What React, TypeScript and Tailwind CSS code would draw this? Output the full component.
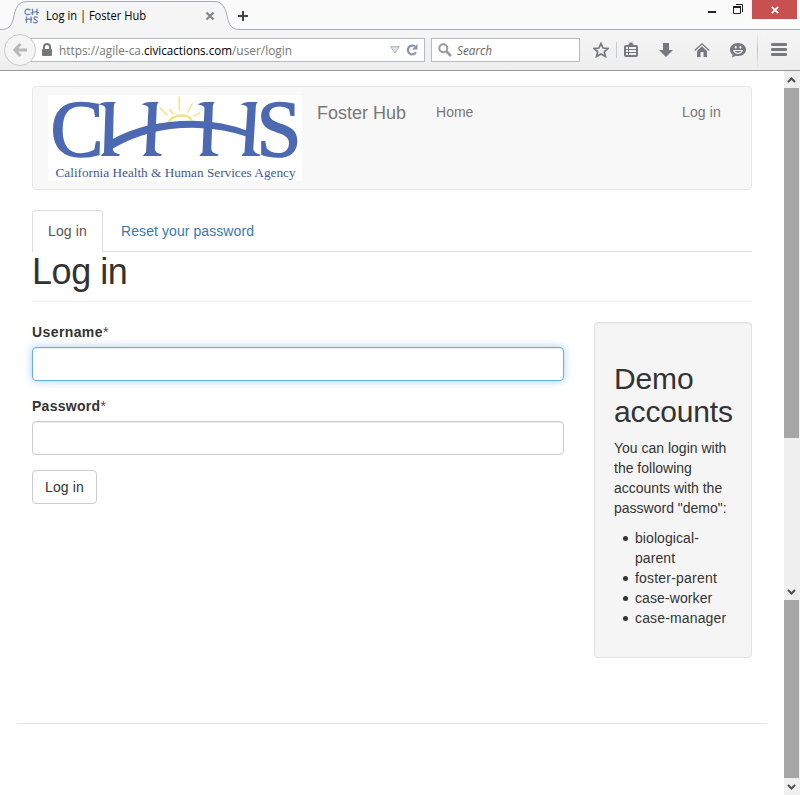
import type { ReactNode } from "react";

const accounts = [
  { name: "biological-parent", tracking: "tracking-[0.08px]" },
  { name: "foster-parent", tracking: "tracking-[0.2px]" },
  { name: "case-worker", tracking: "tracking-[0.1px]" },
  { name: "case-manager", tracking: "tracking-[0.15px]" },
];

const pillars = [
  { top: 57.5, foot: 56.5 },
  { top: 100.5, foot: 98.5 },
  { top: 156.5, foot: 155 },
  { top: 199.5, foot: 197 },
];

function AgencyLogo() {
  return (
    <svg width="254" height="86" viewBox="0 0 254 86" className="block overflow-visible bg-white" aria-label="California Health & Human Services Agency">
      <g fill="none" stroke="#f3e387" strokeLinecap="round" strokeWidth="1.5">
        <path d="M121 26 Q126 20.5 134 20.5 Q140 20.5 143 24" strokeWidth="2.4" />
        <path d="M112 13 L119 20 M122 14.5 L125 19 M131 2 L131.500 15 M144 9 L140 17 M151.500 18 L146 21" />
      </g>
      <g fill="#4c69b1" stroke="#4c69b1" strokeWidth="1.6" fontFamily="'Liberation Serif', serif">
        <text x="2.500" y="60.500" fontSize="81" textLength="53" lengthAdjust="spacingAndGlyphs">C</text>
        <text x="208.500" y="60.500" fontSize="81" textLength="45" lengthAdjust="spacingAndGlyphs">S</text>
      </g>
      <g fill="#4c69b1">
        {pillars.map(({ top, foot }) => (
          <path
            key={top}
            d={`M${top - 7} 9.500 Q${top - 3} 6.800 ${top + 1} 7 H${top + 10.5} Q${top + 8.5} 8 ${top + 8.3} 12 L${foot + 8.3} 54 Q${foot + 8.5} 58 ${foot + 15.5} 59.500 L${foot + 14.5} 61 H${foot - 3.5} Q${foot - 3} 59 ${foot - 0.5} 57.500 L${top} 13 Q${top - 0.5} 10 ${top - 7} 9.500Z`}
          />
        ))}
        <path d="M63 45 Q97 25.500 145 25.700 Q175 26 200 36 L200 42 Q175 33 145 32.700 Q100 32.500 63 54.500Z" />
      </g>
      <text x="7.500" y="82" fontSize="13.500" textLength="240" lengthAdjust="spacingAndGlyphs" fill="#40589f" fontFamily="'Liberation Serif', serif">
        California Health &amp; Human Services Agency
      </text>
    </svg>
  );
}

function Favicon() {
  return (
    <svg width="16" height="16" viewBox="0 0 16 16" fill="none" stroke="#6b83bd" strokeWidth="1.300">
      <path d="M6.500 1.800 Q1 0 1 4 Q1 7.500 6.500 6.200 M8.500 .8V7 M13 .8V7 M7 5Q11 3 15 4.500 M2.500 8.500V15 M7 8.500V15 M1 12Q4 10.500 8 11.500 M14 9.500Q10 8 10 10.300Q10 11.500 12 12Q14 13 13 14.200Q11.500 15.500 9 14" />
    </svg>
  );
}

function ToolIcon({ children }: { children: ReactNode }) {
  return (
    <svg width="16" height="16" viewBox="0 0 16 16" fill="#757980" className="shrink-0">
      {children}
    </svg>
  );
}

function TitleBar() {
  return (
    <div className="relative flex h-[30px] bg-[#fbfbfb]">
      <svg width="800" height="30" viewBox="0 0 800 30" className="absolute inset-0">
        <path d="M0 29.500 C9 29.500 11.500 26 13.500 18 C15.500 8 18 1.500 27 1.500 H214 C223 1.500 225.500 8 227.500 18 C229.500 26 232 29.500 240 29.500 H800 V31 H0Z" fill="#f5f5f5" stroke="#a4a9b2" />
      </svg>
      <div className="relative flex h-full w-full pl-[24px]">
        <div className="flex w-[181px] items-start pt-[8px]">
          <Favicon />
          <svg width="104" height="16" className="ml-[6px] block overflow-visible" fontFamily="'Open Sans', sans-serif">
            <text x="0" y="12" fontSize="12" textLength="100" lengthAdjust="spacingAndGlyphs">Log in | Foster Hub</text>
          </svg>
        </div>
        <svg width="10" height="10" viewBox="0 0 10 10" className="mt-[11px]">
          <path d="M1.500 1.500 L8.500 8.500 M8.500 1.500 L1.500 8.500" stroke="#7f8791" strokeWidth="2.200" />
        </svg>
        <svg width="10" height="10" viewBox="0 0 10 10" className="ml-[23px] mt-[11px]">
          <path d="M5 0V10M0 5H10" stroke="#444" strokeWidth="2" />
        </svg>
        <svg width="36" height="14" viewBox="0 0 36 14" className="ml-[460px] mt-[2px]">
          <path d="M0 9H8V11H0Z" fill="#222" />
          <path d="M25.500 4.500H32.500V11.500H25.500Z M28 2.500H34.500V10" fill="none" stroke="#222" />
          <path d="M25 4H33V6H25Z" fill="#222" />
        </svg>
        <div className="ml-[8px] flex h-[19px] w-[45px] items-center justify-center bg-[#c75050]">
          <svg width="8" height="8" viewBox="0 0 8 8">
            <path d="M.8.8L7.200 7.200M7.200.8L.8 7.200" stroke="#fff" strokeWidth="1.700" />
          </svg>
        </div>
      </div>
    </div>
  );
}

function Toolbar() {
  return (
    <div className="flex h-[41px] items-center border-b border-[#989898] bg-linear-to-b from-[#f5f5f5] to-[#eeeeee] pl-[4px]">
      <div className="z-10 flex size-[32px] shrink-0 items-center justify-center rounded-full border border-[#c9c9c9] bg-[#f5f5f5]">
        <svg width="16" height="16" viewBox="0 0 16 16" fill="none" stroke="#b8b8b8" strokeWidth="3">
          <path d="M8.500 2L2.800 8L8.500 14M3 8H15" />
        </svg>
      </div>
      <div className="-ml-[8px] flex h-[24px] w-[397px] shrink-0 items-center border border-[#b4bac4] bg-white pl-[12px]">
        <svg width="12" height="14" viewBox="0 0 12 14">
          <path d="M3 7V4A3 3 0 0 1 9 4V7" fill="none" stroke="#777" strokeWidth="2" />
          <rect x="1" y="6" width="10" height="7" rx="1" fill="#777" />
        </svg>
        <svg width="240" height="20" className="ml-[6px] overflow-visible" fontFamily="'Open Sans', sans-serif">
          <text y="15" fontSize="12" fill="#777">
            <tspan x="0" textLength="85" lengthAdjust="spacingAndGlyphs">https://agile-ca.</tspan>
            <tspan x="85" fill="#000" textLength="88" lengthAdjust="spacingAndGlyphs">civicactions.com</tspan>
            <tspan x="173" textLength="60" lengthAdjust="spacingAndGlyphs">/user/login</tspan>
          </text>
        </svg>
        <svg width="10" height="8" viewBox="0 0 10 8" className="ml-[91px]">
          <path d="M.7.7H9.300L5 7Z" fill="#dce2eb" stroke="#a9b1bb" />
        </svg>
        <svg width="12" height="12" viewBox="0 0 12 12" className="ml-[6px]">
          <path d="M9 2.500A4.400 4.400 0 1 0 10 8.200" fill="none" stroke="#8795a5" strokeWidth="2.200" />
          <path d="M11.500 0V5.500H6Z" fill="#8795a5" />
        </svg>
      </div>
      <div className="ml-[6px] flex h-[24px] w-[149px] shrink-0 items-center border border-[#b4bac4] bg-white pl-[6px]">
        <svg width="14" height="14" viewBox="0 0 14 14" fill="none" stroke="#999">
          <circle cx="5.300" cy="5.300" r="4" strokeWidth="2" />
          <path d="M8.500 8.500L13 13" strokeWidth="2.600" />
        </svg>
        <svg width="40" height="20" className="ml-[5px] overflow-visible" fontFamily="'Open Sans', sans-serif">
          <text x="0" y="15" fontSize="12" fontStyle="italic" fill="#666" textLength="35" lengthAdjust="spacingAndGlyphs">Search</text>
        </svg>
      </div>
      <div className="ml-[13px] flex items-center">
        <ToolIcon>
          <path d="M8 1.500L10 6L15 6.500L11.300 9.800L12.500 14.500L8 12L3.500 14.500L4.700 9.800L1 6.500L6 6Z" fill="none" stroke="#757980" strokeWidth="1.700" />
        </ToolIcon>
        <div className="ml-[7px] mr-[6px] h-[16px] w-px bg-[#c5cad4]" />
        <ToolIcon>
          <path fillRule="evenodd" d="M1 5Q1 3 3 3H4.500Q6.500 3 6.500 .5H9.500Q9.500 3 11.500 3H13Q15 3 15 5V13Q15 15 13 15H3Q1 15 1 13ZM3 5V7H5V5ZM6 5V7H13V5ZM3 8V10H5V8ZM6 8V10H13V8ZM3 11V13H5V11ZM6 11V13H13V11Z" />
        </ToolIcon>
        <div className="w-[19px]" />
        <ToolIcon><path d="M5 1H11V8H15L8 15L1 8H5Z" /></ToolIcon>
        <div className="w-[20px]" />
        <ToolIcon>
          <path d="M.7 8.500L8 1.800L15.300 8.500" fill="none" stroke="#757980" strokeWidth="1.300" />
          <path d="M3 9L8 4.300L13 9V15H9.500V10H6.500V15H3Z" />
        </ToolIcon>
        <div className="w-[20px]" />
        <ToolIcon>
          <path d="M8 1C3 1 0 4 0 7.500C0 10 1 11.500 2.600 12.700L2 15.500L6 13.700C12 15 16 11.500 16 7.500C16 4 13 1 8 1Z" />
          <ellipse cx="5.700" cy="5.300" rx="1" ry="1.400" fill="#eee" />
          <ellipse cx="10.300" cy="5.300" rx="1" ry="1.400" fill="#eee" />
          <path d="M3 8H13Q12 12 8 12Q4 12 3 8Z" fill="#eee" />
          <path d="M4.500 9H11.500Q10.500 10.700 8 10.700Q5.500 10.700 4.500 9Z" />
        </ToolIcon>
        <div className="ml-[11px] mr-[13px] h-[38px] w-px bg-linear-to-b from-transparent via-[#bac0ca] to-transparent" />
        <ToolIcon>
          <rect y="1" width="16" height="3" rx="1.200" />
          <rect y="6" width="16" height="3" rx="1.200" />
          <rect y="11" width="16" height="3" rx="1.200" />
        </ToolIcon>
      </div>
    </div>
  );
}

function ScrollArrow({ up = false, className }: { up?: boolean; className: string }) {
  return (
    <div className={`flex items-center justify-center ${className}`}>
      <svg width="9" height="6" viewBox="0 0 9 6" fill="none" stroke="#505050" strokeWidth="2">
        <path d={up ? "M1 5L4.500 1.500L8 5" : "M1 1L4.500 4.500L8 1"} />
      </svg>
    </div>
  );
}

function Scrollbars() {
  return (
    <div className="w-[16px] shrink-0 bg-[#f0f0f0] pr-px">
      <ScrollArrow up className="h-[17px]" />
      <div className="h-[350px] bg-[#a6a6a6]" />
      <div className="h-[145px]" />
      <ScrollArrow className="h-[17px]" />
      <div className="h-[178px] bg-[#a6a6a6]" />
      <ScrollArrow className="h-[17px]" />
    </div>
  );
}

function Field({ label, focused = false }: { label: string; focused?: boolean }) {
  return (
    <label className="mb-[15px] block">
      <span className={`mb-[5px] block font-bold ${focused ? "tracking-[0.4px]" : "tracking-[0.28px]"}`}>
        {label}
        <span className="font-normal text-[#683c3c]">*</span>
      </span>
      <input
        className={
          focused
            ? "block h-[34px] w-full rounded-[4px] border border-[#66afe9] bg-white px-3 shadow-[inset_0_1px_1px_rgba(0,0,0,0.075),0_0_8px_rgba(102,175,233,0.6)] outline-none"
            : "block h-[34px] w-full rounded-[4px] border border-[#ccc] bg-white px-3 shadow-[inset_0_1px_1px_rgba(0,0,0,0.075)] outline-none"
        }
      />
    </label>
  );
}

export default function App() {
  return (
    <div className="flex h-[795px] w-[800px] flex-col overflow-hidden bg-white">
      <TitleBar />
      <Toolbar />
      <div className="flex min-h-0 flex-1 font-['Liberation_Sans',Arial,sans-serif] text-[14px] leading-[20px] text-[#333]">
        <main className="w-[784px] px-[17px] pt-[15px]">
          <div className="px-[15px]">
            <nav className="flex h-[104px] w-[720px] items-start rounded-[4px] border border-[#e7e7e7] bg-[#f8f8f8] pl-[15px] pt-[8px] text-[#777]">
              <AgencyLogo />
              <a className="ml-[15px] mt-[8px] text-[18px]">Foster Hub</a>
              <a className="ml-[30px] mt-[7px]">Home</a>
              <a className="ml-auto mr-[30px] mt-[7px] tracking-[0.15px]">Log in</a>
            </nav>
            <div className="mt-[20px] flex h-[42px] w-[720px] border-b border-[#ddd]">
              <a className="h-[42px] w-[71px] whitespace-nowrap rounded-t-[4px] border border-b-0 border-[#ddd] bg-white px-[15px] pt-[10px] tracking-[0.15px] text-[#555]">Log in</a>
              <a className="ml-[18px] pt-[11px] tracking-[0.08px] text-[#337ab7]">Reset your password</a>
            </div>
            <h1 className="h-[50px] w-[720px] border-b border-[#eee] text-[36px] leading-[39.6px] tracking-[-0.45px]">Log in</h1>
            <div className="mt-[20px] flex w-[720px] items-start justify-between">
              <form className="w-[532px]">
                <Field label="Username" focused />
                <Field label="Password" />
                <button type="button" className="block h-[34px] w-[65px] whitespace-nowrap rounded-[4px] border border-[#ccc] bg-white px-[12px] text-left tracking-[0.15px]">Log in</button>
              </form>
              <aside className="h-[336px] w-[158px] rounded-[4px] border border-[#e3e3e3] bg-[#f5f5f5] px-[19px] pt-[39px] shadow-[inset_0_1px_1px_rgba(0,0,0,0.05)]">
                <h2 className="-mr-[5px] text-[30px] leading-[33px] tracking-[-0.15px]">Demo accounts</h2>
                <p className="mt-[10px]">You can login with the following accounts with the password "demo":</p>
                <ul className="mt-[10px] pl-[9px]">
                  {accounts.map(({ name, tracking }) => (
                    <li key={name} className={`flex items-start gap-[7px] ${tracking}`}>
                      <span className="mt-[8px] size-[5px] shrink-0 rounded-full bg-[#333]" />
                      <span>{name}</span>
                    </li>
                  ))}
                </ul>
              </aside>
            </div>
          </div>
          <hr className="mt-[65px] w-[750px] border-t border-[#e5e5e5]" />
        </main>
        <Scrollbars />
      </div>
    </div>
  );
}
